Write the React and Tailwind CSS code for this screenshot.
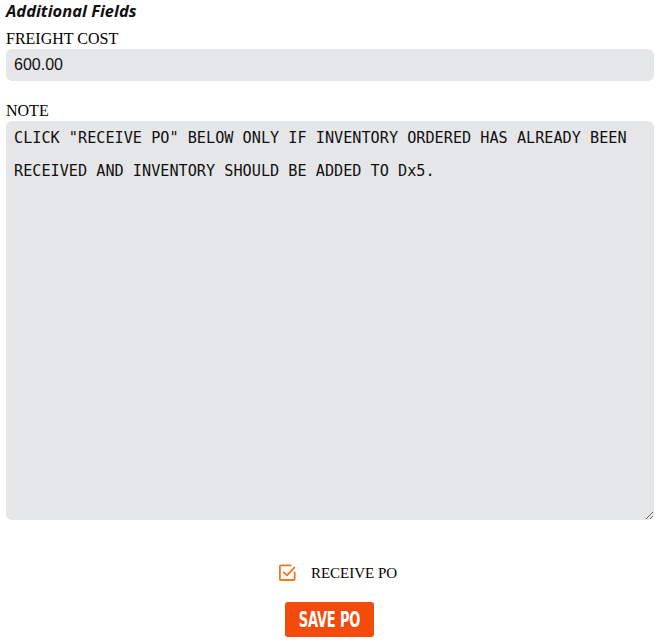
import { useState } from 'react';

export default function App() {
  const [freight, setFreight] = useState('600.00');
  const [note, setNote] = useState(
    'CLICK "RECEIVE PO" BELOW ONLY IF INVENTORY ORDERED HAS ALREADY BEEN RECEIVED AND INVENTORY SHOULD BE ADDED TO Dx5.'
  );
  const [receive, setReceive] = useState(true);

  return (
    <div className="w-[661px] h-[644px] bg-white px-[6px] pt-[1px] text-black overflow-hidden">
      <h3 className="font-['Open_Sans',sans-serif] italic font-bold text-[16.5px] leading-[19px] text-[#111]">
        Additional Fields
      </h3>

      <label className="block mt-[10px] font-['Liberation_Serif',serif] text-[16px] leading-[18px]">
        FREIGHT COST
      </label>
      <input
        type="text"
        value={freight}
        onChange={(e) => setFreight(e.target.value)}
        className="block w-[648px] h-[32px] mt-[1px] px-[8px] bg-[#e5e6e8] rounded-[6px] outline-none font-['Liberation_Sans',sans-serif] text-[16px] text-[#111]"
      />

      <label className="block mt-[21px] font-['Liberation_Serif',serif] text-[16px] leading-[18px]">
        NOTE
      </label>
      <textarea
        value={note}
        onChange={(e) => setNote(e.target.value)}
        className="block w-[648px] h-[399px] mt-[1px] px-[8px] py-[1px] bg-[#e5e6e8] rounded-[6px] outline-none font-['DejaVu_Sans_Mono',monospace] text-[15.2px] leading-[33px] text-[#111]"
      />

      <div className="flex justify-center items-center gap-[14px] mt-[43px] pl-[14px]">
        <button type="button" onClick={() => setReceive(!receive)} className="w-[19px] h-[19px]">
          <svg viewBox="0 0 18 18" width="19" height="19" fill="none" stroke="#f5771f" strokeWidth="1.7" strokeLinecap="round" strokeLinejoin="round">
            <path d="M15.8 9v6.3a.8.8 0 0 1-.8.8H2.6a.8.8 0 0 1-.8-.8V3a.8.8 0 0 1 .8-.8h9.2" />
            <path d="M5.5 8.8l3 3 7-7.5" />
          </svg>
        </button>
        <span className="font-['Liberation_Serif',serif] text-[15px] leading-[18px]">RECEIVE PO</span>
      </div>

      <div className="flex justify-center mt-[20px] pr-[2px]">
        <button
          type="button"
          className="w-[89px] h-[35px] flex items-center justify-center bg-[#f24b0c] rounded-[3px] text-white"
        >
          <span className="inline-block whitespace-nowrap scale-x-[0.66] font-['DejaVu_Sans_Condensed',sans-serif] font-bold text-[22px] leading-none tracking-[-0.3px]">
            SAVE PO
          </span>
        </button>
      </div>
    </div>
  );
}
